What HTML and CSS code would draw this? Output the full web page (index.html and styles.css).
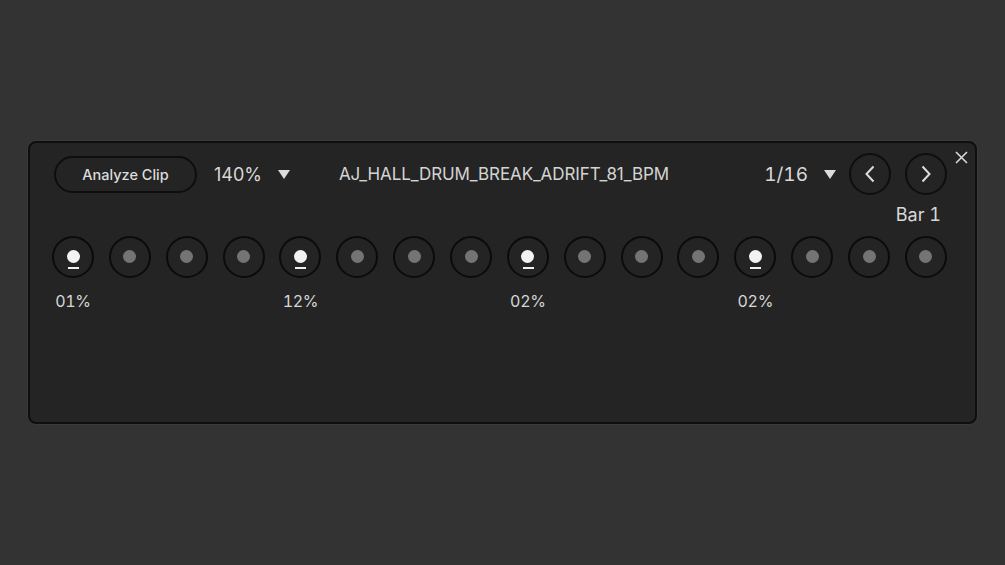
FILE: index.html
```html
<!DOCTYPE html>
<html>
<head>
<meta charset="utf-8">
<link rel="stylesheet" href="styles.css">
</head>
<body>
<div class="panel">
  <button class="close" aria-label="Close">
    <svg width="13" height="13" viewBox="0 0 13 13"><path d="M1 1 L12 12 M12 1 L1 12" stroke="#d8d8d8" stroke-width="1.6" fill="none"/></svg>
  </button>
  <div class="toprow">
    <button class="analyze">Analyze Clip</button>
    <div class="dropdown zoom"><span>140%</span><span class="tri"></span></div>
    <div class="title">AJ_HALL_DRUM_BREAK_ADRIFT_81_BPM</div>
    <div class="right">
      <div class="dropdown grid"><span>1/16</span><span class="tri"></span></div>
      <button class="nav" aria-label="Previous">
        <svg width="12" height="18" viewBox="0 0 12 18"><path d="M9.5 1.5 L2.5 9 L9.5 16.5" stroke="#dcdcdc" stroke-width="2" fill="none"/></svg>
      </button>
      <button class="nav" aria-label="Next">
        <svg width="12" height="18" viewBox="0 0 12 18"><path d="M2.5 1.5 L9.5 9 L2.5 16.5" stroke="#dcdcdc" stroke-width="2" fill="none"/></svg>
      </button>
    </div>
  </div>
  <div class="barrow">Bar 1</div>
  <div class="knobs">
    <div class="knob on"><span class="dot"></span></div>
    <div class="knob"><span class="dot"></span></div>
    <div class="knob"><span class="dot"></span></div>
    <div class="knob"><span class="dot"></span></div>
    <div class="knob on"><span class="dot"></span></div>
    <div class="knob"><span class="dot"></span></div>
    <div class="knob"><span class="dot"></span></div>
    <div class="knob"><span class="dot"></span></div>
    <div class="knob on"><span class="dot"></span></div>
    <div class="knob"><span class="dot"></span></div>
    <div class="knob"><span class="dot"></span></div>
    <div class="knob"><span class="dot"></span></div>
    <div class="knob on"><span class="dot"></span></div>
    <div class="knob"><span class="dot"></span></div>
    <div class="knob"><span class="dot"></span></div>
    <div class="knob"><span class="dot"></span></div>
  </div>
  <div class="labels">
    <span class="lbl c1">01%</span>
    <span class="lbl c5">12%</span>
    <span class="lbl c9">02%</span>
    <span class="lbl c13">02%</span>
  </div>
</div>
</body>
</html>
```

FILE: styles.css
```css
* { box-sizing: border-box; }
html, body { margin: 0; padding: 0; }
body {
  background: #333333;
  width: 1005px;
  height: 565px;
  overflow: hidden;
  font-family: "Inter", "Lato", sans-serif;
  color: #d6d6d6;
}
.panel {
  position: relative;
  margin: 141px 0 0 28px;
  width: 949px;
  height: 283px;
  background: #242424;
  border: 2px solid #0e0e0e;
  border-radius: 8px;
  box-shadow: 0 0 0 1px #3a3a3a;
  padding: 10px 28px 0 22px;
}
button {
  font-family: inherit;
  color: inherit;
  background: none;
  border: none;
  padding: 0;
  cursor: pointer;
}
.close {
  position: absolute;
  top: 7px;
  right: 6px;
  width: 15px;
  height: 15px;
  display: flex;
  align-items: center;
  justify-content: center;
}
.toprow {
  display: flex;
  align-items: center;
  height: 42px;
}
.analyze {
  margin-left: 2px;
  width: 143px;
  height: 37px;
  border: 2px solid #0e0e0e;
  border-radius: 19px;
  font-size: 14.5px;
  font-weight: 500;
  color: #dcdcdc;
}
.dropdown {
  display: flex;
  align-items: center;
  font-size: 18px;
  color: #d8d8d8;
}
.tri {
  display: inline-block;
  width: 0;
  height: 0;
  border-left: 6px solid transparent;
  border-right: 6px solid transparent;
  border-top: 9px solid #dcdcdc;
}
.zoom { margin-left: 17px; }
.zoom .tri { margin-left: 16px; }
.title {
  margin-left: 49px;
  font-size: 17px;
  color: #d4d4d4;
  letter-spacing: -0.1px;
}
.right {
  margin-left: auto;
  display: flex;
  align-items: center;
}
.grid span:first-child {
  font-feature-settings: "tnum" 1;
  font-size: 19px;
}
.grid .tri { margin-left: 16px; }
.nav {
  width: 42px;
  height: 42px;
  border: 2px solid #0e0e0e;
  border-radius: 50%;
  display: flex;
  align-items: center;
  justify-content: center;
  margin-left: 13px;
}
.nav + .nav { margin-left: 14px; }
.barrow {
  display: flex;
  justify-content: flex-end;
  padding-right: 6px;
  margin-top: 10px;
  font-size: 18px;
  line-height: 20px;
  color: #d8d8d8;
  font-feature-settings: "tnum" 1;
}
.knobs {
  margin-top: 11px;
  display: flex;
  justify-content: space-between;
  width: 895px;
}
.knob {
  position: relative;
  width: 42px;
  height: 42px;
  border: 2px solid #0b0b0b;
  border-radius: 50%;
  display: flex;
  align-items: center;
  justify-content: center;
}
.dot {
  width: 13px;
  height: 13px;
  border-radius: 50%;
  background: #747474;
  margin-top: -1px;
}
.knob.on .dot { background: #f2f2f2; }
.knob.on::after {
  content: "";
  position: absolute;
  left: 14px;
  top: 29px;
  width: 11px;
  height: 2px;
  background: #f0f0f0;
}
.labels {
  margin-top: 13px;
  width: 895px;
  display: grid;
  grid-template-columns: repeat(16, 42px);
  justify-content: space-between;
}
.lbl {
  font-size: 16px;
  color: #d6d6d6;
  text-align: center;
  white-space: nowrap;
  display: flex;
  justify-content: center;
  font-feature-settings: "tnum" 1;
  letter-spacing: -0.3px;
}
.c1 { grid-column: 1; }
.c5 { grid-column: 5; }
.c9 { grid-column: 9; }
.c13 { grid-column: 13; }
```
